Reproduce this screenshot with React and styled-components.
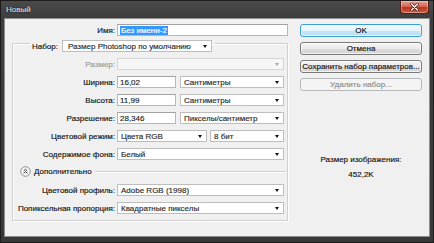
import styled, { createGlobalStyle } from 'styled-components';

const GlobalStyle = createGlobalStyle`
  html, body {
    margin: 0;
    padding: 0;
    background: #2b2b2b;
  }
  body {
    font-family: "Liberation Sans", Arial, sans-serif;
    font-size: 8px;
    color: #111;
    -webkit-text-stroke: 0.15px currentColor;
  }
`;

const Window = styled.div`
  width: 434px;
  height: 243px;
  box-sizing: border-box;
  border: 1px solid #1b1b1b;
  background: linear-gradient(#4a4a4a, #3c3c3c 20px, #383838);
  padding: 0 3px 5px;
  display: flex;
  flex-direction: column;
`;

const TitleBar = styled.div`
  height: 17px;
  display: flex;
  align-items: flex-start;
  justify-content: space-between;
`;

const Title = styled.span`
  padding: 4px 0 0 2px;
  color: #dcdcdc;
  font-size: 8px;
  text-shadow: 0 0 2px #000;
`;

const CloseButton = styled.div`
  width: 29px;
  height: 13px;
  margin-right: 1px;
  box-sizing: border-box;
  border: 1px solid #5a1c12;
  border-top: none;
  border-radius: 0 0 4px 4px;
  background: linear-gradient(#e3a196, #d06a57 45%, #b8371f 55%, #cf5a3c);
  box-shadow: inset 0 0 0 1px rgba(255, 255, 255, 0.35);
  display: flex;
  align-items: center;
  justify-content: center;
  svg {
    display: block;
  }
`;

const Body = styled.div`
  flex: 1;
  background: #f0f0f0;
  box-shadow: inset 0 0 0 1px #8e8e8e;
  display: flex;
  padding: 6px 0 0 8px;
`;

const LeftColumn = styled.div`
  width: 276px;
  display: flex;
  flex-direction: column;
`;

const RightColumn = styled.div`
  width: 122px;
  margin-left: 12px;
  display: flex;
  flex-direction: column;
`;

const Row = styled.div`
  display: flex;
  align-items: center;
  height: 12px;
  padding-left: ${p => (p.$outside ? '1px' : '0')};
`;

const Label = styled.span`
  width: ${p => p.$width || 102}px;
  margin-right: 2px;
  text-align: right;
  white-space: nowrap;
  color: ${p => (p.$disabled ? '#9a9a9a' : '#111')};
`;

const TextInput = styled.div`
  width: ${p => p.$width}px;
  height: 12px;
  box-sizing: border-box;
  border: 1px solid #b7b7b7;
  border-top-color: #a2a2a2;
  background: #fff;
  display: flex;
  align-items: center;
  padding-left: 2px;
  color: #222;
  white-space: nowrap;
  overflow: hidden;
`;

const Selected = styled.span`
  background: #3399ff;
  color: #fff;
  line-height: 9px;
  padding: 0 1px;
`;

const Select = styled.div`
  width: ${p => p.$width}px;
  height: 12px;
  box-sizing: border-box;
  border: 1px solid ${p => (p.$disabled ? '#d6d6d6' : '#bdbdbd')};
  background: ${p => (p.$disabled ? '#f6f6f6' : '#fff')};
  display: flex;
  align-items: center;
  padding: 0 4px 0 ${p => p.$pad || 3}px;
  color: #2a2a2a;
  white-space: nowrap;
  margin-left: ${p => p.$gap || 0}px;
`;

const SelectText = styled.span`
  flex: 1;
  overflow: hidden;
`;

const Arrow = styled.span`
  width: 0;
  height: 0;
  border-left: 2.5px solid transparent;
  border-right: 2.5px solid transparent;
  border-top: 3px solid ${p => (p.$disabled ? '#a8a8a8' : '#111')};
`;

const Group = styled.fieldset`
  margin: -2px 0 0;
  padding: 0 3px 6px 0;
  min-width: 0;
  border: 1px solid #d0d0d0;
  box-shadow: inset 1px 1px 0 #fff, 1px 1px 0 #fff;
  width: 276px;
  box-sizing: border-box;
`;

const Legend = styled.legend`
  margin-left: 17px;
  padding: 6px 3px 0 2px;
  display: flex;
  align-items: center;
`;

const LegendLabel = styled.span`
  margin-right: 4px;
  color: #111;
`;

const Rows = styled.div`
  display: flex;
  flex-direction: column;
  gap: 6px;
  padding-top: ${p => (p.$flush ? 0 : 6)}px;
`;

const AdvancedRow = styled.div`
  display: flex;
  align-items: center;
  height: 11px;
  margin: 6px -2px 7px 0;
  svg {
    display: block;
    margin-left: 7px;
  }
`;

const AdvancedText = styled.span`
  margin-left: 3px;
  color: #111;
`;

const Rule = styled.div`
  flex: 1;
  height: 1px;
  margin-left: 3px;
  background: #d0d0d0;
  box-shadow: 0 1px 0 #fff;
`;

const Buttons = styled.div`
  display: flex;
  flex-direction: column;
  gap: 5px;
`;

const Button = styled.div`
  height: 13px;
  box-sizing: border-box;
  border: 1px solid ${p => (p.$default ? '#3c9fd0' : p.$disabled ? '#b5b9bc' : '#7a7a7a')};
  border-radius: 3px;
  background: ${p =>
    p.$default
      ? 'linear-gradient(#f2fafe, #e4f4fc 50%, #c8e8f8 51%, #b6def4)'
      : p.$disabled
      ? '#f4f4f4'
      : 'linear-gradient(#f4f4f4, #ececec 50%, #dedede 51%, #d2d2d2)'};
  box-shadow: inset 0 0 0 1px ${p => (p.$disabled ? 'transparent' : 'rgba(255,255,255,0.7)')};
  display: flex;
  align-items: center;
  justify-content: center;
  color: ${p => (p.$disabled ? '#8a8a8a' : '#111')};
  white-space: nowrap;
`;

const Info = styled.div`
  margin-top: 64px;
  display: flex;
  flex-direction: column;
  align-items: center;
  gap: 5px;
  color: #111;
  line-height: 10px;
`;

const Dropdown = ({ width, children, disabled, gap, pad }) => (
  <Select $width={width} $disabled={disabled} $gap={gap} $pad={pad}>
    <SelectText>{children}</SelectText>
    <Arrow $disabled={disabled} />
  </Select>
);

const ChevronIcon = () => (
  <svg width="11" height="11" viewBox="0 0 11 11">
    <circle cx="5.5" cy="5.5" r="4.8" fill="#fafafa" stroke="#8c8c8c" strokeWidth="1" />
    <path d="M3.6 5 L5.5 3.2 L7.4 5 M3.6 7.4 L5.5 5.6 L7.4 7.4" fill="none" stroke="#333" strokeWidth="1" />
  </svg>
);

const CloseIcon = () => (
  <svg width="9" height="8" viewBox="0 0 9 8">
    <path d="M1.5 1 L7.5 7 M7.5 1 L1.5 7" stroke="#4a1208" strokeWidth="2.6" strokeLinecap="round" />
    <path d="M1.5 1 L7.5 7 M7.5 1 L1.5 7" stroke="#fff" strokeWidth="1.4" strokeLinecap="round" />
  </svg>
);

const App = () => {
  return (
    <>
      <GlobalStyle />
      <Window>
        <TitleBar>
          <Title>Новый</Title>
          <CloseButton>
            <CloseIcon />
          </CloseButton>
        </TitleBar>
        <Body>
          <LeftColumn>
            <Row $outside>
              <Label>Имя:</Label>
              <TextInput $width={171}>
                <Selected>Без имени-2</Selected>
              </TextInput>
            </Row>
            <Group>
              <Legend>
                <LegendLabel>Набор:</LegendLabel>
                <Dropdown width={150} pad={5}>Размер Photoshop по умолчанию</Dropdown>
              </Legend>
              <Rows>
                <Row>
                  <Label $disabled>Размер:</Label>
                  <Dropdown width={167} disabled />
                </Row>
                <Row>
                  <Label>Ширина:</Label>
                  <TextInput $width={59}>16,02</TextInput>
                  <Dropdown width={104} gap={4}>Сантиметры</Dropdown>
                </Row>
                <Row>
                  <Label>Высота:</Label>
                  <TextInput $width={59}>11,99</TextInput>
                  <Dropdown width={104} gap={4}>Сантиметры</Dropdown>
                </Row>
                <Row>
                  <Label>Разрешение:</Label>
                  <TextInput $width={59}>28,346</TextInput>
                  <Dropdown width={104} gap={4}>Пикселы/сантиметр</Dropdown>
                </Row>
                <Row>
                  <Label>Цветовой режим:</Label>
                  <Dropdown width={90}>Цвета RGB</Dropdown>
                  <Dropdown width={74} gap={3}>8 бит</Dropdown>
                </Row>
                <Row>
                  <Label>Содержимое фона:</Label>
                  <Dropdown width={167}>Белый</Dropdown>
                </Row>
              </Rows>
              <AdvancedRow>
                <ChevronIcon />
                <AdvancedText>Дополнительно</AdvancedText>
                <Rule />
              </AdvancedRow>
              <Rows $flush>
                <Row>
                  <Label>Цветовой профиль:</Label>
                  <Dropdown width={167}>Adobe RGB (1998)</Dropdown>
                </Row>
                <Row>
                  <Label>Попиксельная пропорция:</Label>
                  <Dropdown width={167}>Квадратные пикселы</Dropdown>
                </Row>
              </Rows>
            </Group>
          </LeftColumn>
          <RightColumn>
            <Buttons>
              <Button $default>OK</Button>
              <Button>Отмена</Button>
              <Button>Сохранить набор параметров...</Button>
              <Button $disabled>Удалить набор...</Button>
            </Buttons>
            <Info>
              <span>Размер изображения:</span>
              <span>452,2K</span>
            </Info>
          </RightColumn>
        </Body>
      </Window>
    </>
  );
};

export default App;
